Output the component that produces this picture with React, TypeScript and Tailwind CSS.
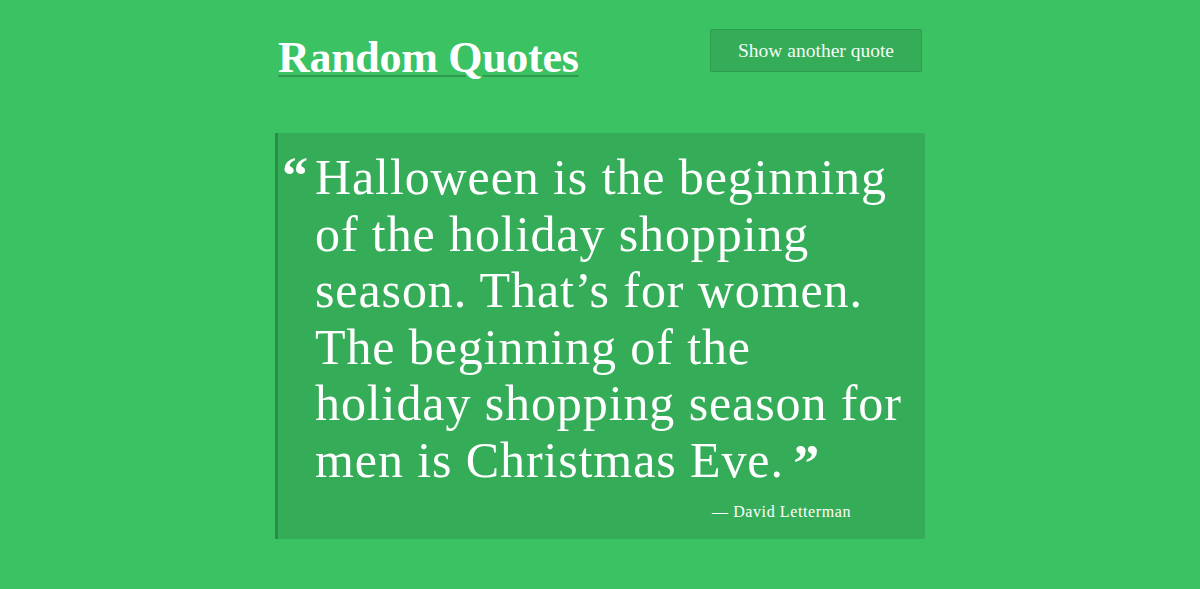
import React from "react";

export default function App() {
  const serif = { fontFamily: '"Liberation Serif", "DejaVu Serif", serif' };
  return (
    <div className="min-h-[589px] w-full bg-[#3bc262] text-white" style={serif}>
      <div className="mx-auto w-[650px]">
        <header className="flex items-start justify-between pt-[29px]">
          <h1 className="ml-[3px] mt-[4px] text-[44px] font-bold leading-[50px] tracking-[-0.3px] underline decoration-[#2f9a4d] decoration-[2px] underline-offset-[3px]">
            Random Quotes
          </h1>
          <button className="mr-[3px] h-[43px] w-[212px] rounded-[2px] border border-[#2e9c4e] bg-[#35ad58] text-[19.5px] text-[#f4fbf6]">
            Show another quote
          </button>
        </header>
        <section className="mt-[50px] h-[406px] rounded-r-[3px] border-l-[3px] border-[#2b8c45] bg-[#35ad58] pl-[4px] pr-[10px] pt-[16px]">
          <div className="flex">
            <span className="w-[33px] shrink-0 pt-[12px] text-[52px] font-bold leading-[30px]">“</span>
            <p className="text-[50px] leading-[56.5px] tracking-[0.9px]">
              Halloween is the beginning
              <br />
              of the holiday shopping
              <br />
              season. That’s for women.
              <br />
              The beginning of the
              <br />
              holiday shopping season for
              <br />
              men is Christmas Eve.{" "}
              <span className="relative top-[17px] -ml-[4px] inline-block h-[30px] align-top text-[52px] font-bold leading-[30px]">”</span>
            </p>
          </div>
          <div className="mt-[12px] pr-[64px] text-right text-[16px] tracking-[0.6px]">— David Letterman</div>
        </section>
      </div>
    </div>
  );
}
